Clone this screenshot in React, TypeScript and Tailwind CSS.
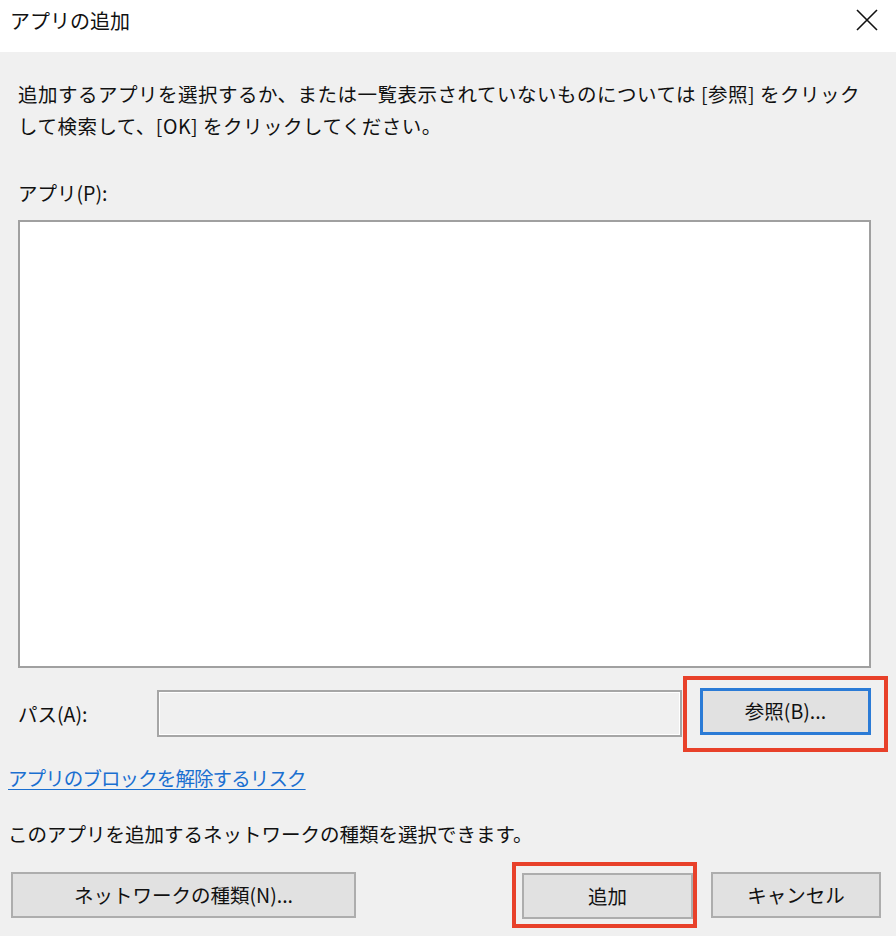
import React from "react";

// Windows 風「アプリの追加」ダイアログ
const FONT = "font-['Noto_Sans_CJK_JP','Noto_Sans',sans-serif]";

function CloseIcon() {
    return (
        <svg width="22" height="22" viewBox="0 0 22 22" className="block">
            <path d="M1 1 L21 21 M21 1 L1 21" stroke="#111" strokeWidth="1.6" fill="none" />
        </svg>
    );
}

function DialogButton({ children, className = "" }: { children: React.ReactNode; className?: string }) {
    return (
        <button
            className={`shrink-0 h-[46px] flex items-center justify-center bg-[#e1e1e1] border-2 border-[#adadad] text-[19.5px] text-[#111] ${className}`}
        >
            {children}
        </button>
    );
}

export default function App() {
    return (
        <div className={`w-[896px] h-[936px] flex flex-col bg-[#f0f0f0] text-[#111] overflow-hidden ${FONT}`}>
            {/* タイトルバー */}
            <div className="h-[52px] bg-white flex items-center justify-between pl-[10px] pr-[18px] shrink-0">
                <span className="text-[20px] leading-none pb-[10px]">アプリの追加</span>
                <span className="pb-[12px]"><CloseIcon /></span>
            </div>

            {/* 本体 */}
            <div className="flex flex-col px-[18px] pt-[26px]">
                <p className="text-[19.5px] leading-[32px] tracking-[0.5px] whitespace-nowrap">
                    追加するアプリを選択するか、または一覧表示されていないものについては [参照] をクリック
                    <br />
                    して検索して、[OK] をクリックしてください。
                </p>

                <div className="mt-[39px] text-[19.5px] leading-[24px]">アプリ(P):</div>

                <div className="mt-[15px] w-[853px] h-[448px] bg-white border-2 border-[#a0a0a0]" />

                <div className="mt-[22px] flex items-center">
                    <span className="shrink-0 w-[139px] text-[19.5px]">パス(A):</span>
                    <div className="shrink-0 w-[525px] h-[47px] border-2 border-[#a6a6a6] bg-[#f0f0f0] shadow-[inset_0_0_0_1px_#ffffff]" />
                    {/* 赤枠で強調された参照ボタン */}
                    <div className="shrink-0 ml-[1px] pl-[13px] pr-[13px] pt-[8px] pb-[13px] border-[4px] border-[#e8412a] -my-[15px]">
                        <button className="w-[171px] h-[47px] flex items-center justify-center bg-[#e1e1e1] border-[3px] border-[#2b7bd6] text-[19.5px]">
                            参照(B)...
                        </button>
                    </div>
                </div>

                <a className="-ml-[10px] mt-[27px] text-[19.5px] text-[#1a6fd0] underline underline-offset-[3px] leading-[28px] tracking-[-0.9px] w-fit">
                    アプリのブロックを解除するリスク
                </a>

                <p className="-ml-[10px] mt-[28px] text-[19.5px] leading-[28px]">
                    このアプリを追加するネットワークの種類を選択できます。
                </p>

                <div className="-ml-[7px] mt-[24px] flex items-center">
                    <DialogButton className="w-[345px]">ネットワークの種類(N)...</DialogButton>
                    <div className="shrink-0 ml-[156px] pl-[6px] pt-[7px] pb-[5px] border-[4px] border-[#e8412a] -my-[11px]">
                        <DialogButton className="w-[171px]">追加</DialogButton>
                    </div>
                    <DialogButton className="ml-[14px] w-[170px]">キャンセル</DialogButton>
                </div>
            </div>
        </div>
    );
}
